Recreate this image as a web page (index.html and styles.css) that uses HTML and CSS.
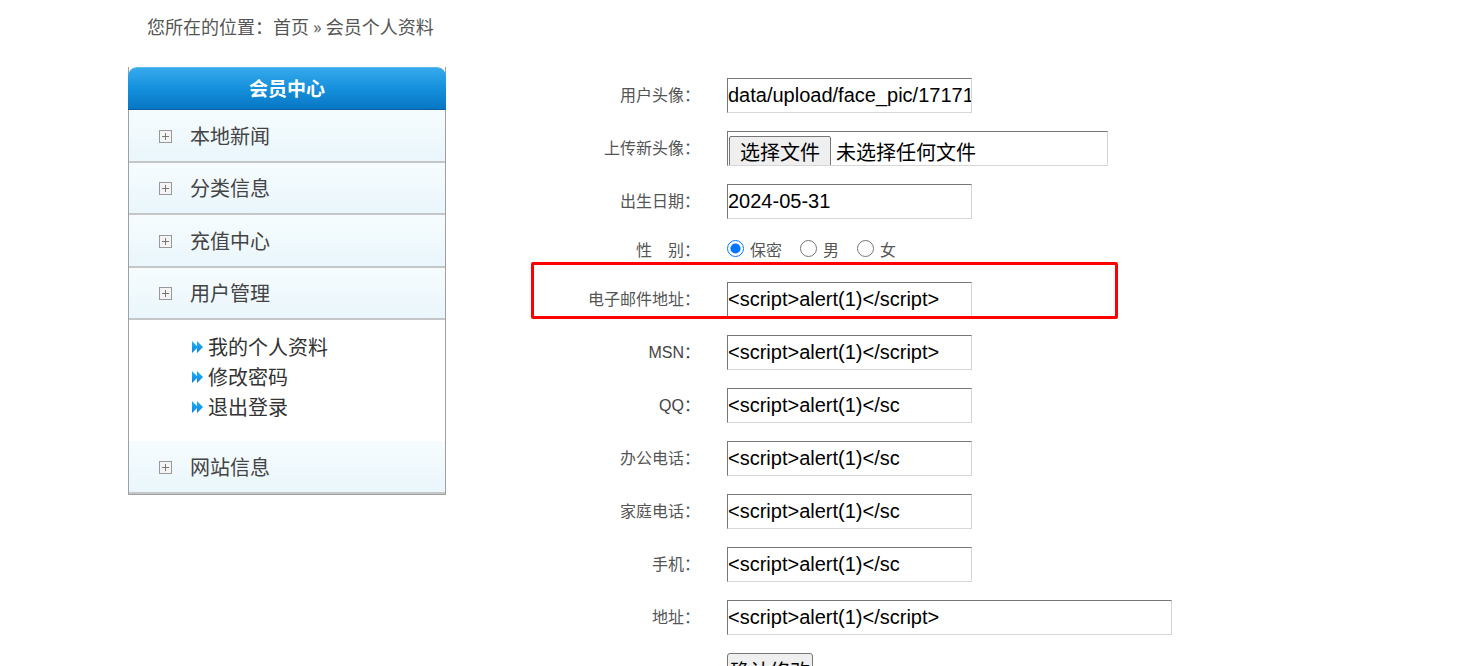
FILE: index.html
```html
<!DOCTYPE html>
<html lang="zh-CN">
<head>
<meta charset="utf-8">
<title>会员个人资料</title>
<link rel="stylesheet" href="styles.css">
</head>
<body>
<div class="page">
  <div class="crumb">您所在的位置：<a href="#">首页</a> » 会员个人资料</div>
  <div class="main">
    <aside class="side">
      <div class="side-head">会员中心</div>
      <div class="side-row"><span class="plus"></span>本地新闻</div>
      <div class="side-row"><span class="plus"></span>分类信息</div>
      <div class="side-row"><span class="plus"></span>充值中心</div>
      <div class="side-row"><span class="plus"></span>用户管理</div>
      <ul class="sub">
        <li><svg class="arr" viewBox="0 0 12 12" width="12" height="12"><defs><linearGradient id="g" x1="0" y1="0" x2="0" y2="1"><stop offset="0" stop-color="#22b8f5"/><stop offset="1" stop-color="#0a7fe0"/></linearGradient></defs><path d="M0 0 L6 6 L0 12 Z M5 0 L11 6 L5 12 Z" fill="url(#g)"/></svg>我的个人资料</li>
        <li><svg class="arr" viewBox="0 0 12 12" width="12" height="12"><path d="M0 0 L6 6 L0 12 Z M5 0 L11 6 L5 12 Z" fill="url(#g)"/></svg>修改密码</li>
        <li><svg class="arr" viewBox="0 0 12 12" width="12" height="12"><path d="M0 0 L6 6 L0 12 Z M5 0 L11 6 L5 12 Z" fill="url(#g)"/></svg>退出登录</li>
      </ul>
      <div class="side-row last"><span class="plus"></span>网站信息</div>
    </aside>
    <form class="form">
      <label class="lbl">用户头像：</label>
      <input class="txt" type="text" value="data/upload/face_pic/1717138720.jpg">
      <label class="lbl">上传新头像：</label>
      <div class="file"><button type="button" class="file-btn">选择文件</button><span class="file-name">未选择任何文件</span></div>
      <label class="lbl">出生日期：</label>
      <input class="txt" type="text" value="2024-05-31">
      <label class="lbl">性　别：</label>
      <div class="radios">
        <label class="opt"><input type="radio" name="sex" checked>保密</label>
        <label class="opt"><input type="radio" name="sex">男</label>
        <label class="opt"><input type="radio" name="sex">女</label>
      </div>
      <label class="lbl">电子邮件地址：</label>
      <input class="txt" type="text" value="<script>alert(1)</script>">
      <label class="lbl lat">MSN：</label>
      <input class="txt" type="text" value="<script>alert(1)</script>">
      <label class="lbl lat">QQ：</label>
      <input class="txt" type="text" value="<script>alert(1)</sc">
      <label class="lbl">办公电话：</label>
      <input class="txt" type="text" value="<script>alert(1)</sc">
      <label class="lbl">家庭电话：</label>
      <input class="txt" type="text" value="<script>alert(1)</sc">
      <label class="lbl">手机：</label>
      <input class="txt" type="text" value="<script>alert(1)</sc">
      <label class="lbl">地址：</label>
      <input class="txt wide" type="text" value="<script>alert(1)</script>">
      <span></span>
      <div><button type="button" class="submit">确认修改</button></div>
    </form>
  </div>
  <div class="mark"></div>
</div>
</body>
</html>
```
FILE: styles.css
```css
html, body {
  margin: 0;
  padding: 0;
  background: #fff;
}
.page {
  position: relative;
  padding-left: 128px;
  font-family: "Noto Sans CJK SC", "Liberation Sans", sans-serif;
  color: #555;
  height: 666px;
  overflow: hidden;
}
.crumb {
  padding: 13px 0 0 19px;
  height: 27px;
  line-height: 26px;
  font-size: 18px;
  color: #555;
}
.crumb a {
  color: #555;
  text-decoration: none;
}
.main {
  display: flex;
  align-items: flex-start;
  margin-top: 27px;
}
.side {
  width: 318px;
  box-sizing: border-box;
  border-left: 1px solid #a0a0a0;
  border-right: 1px solid #a0a0a0;
  border-bottom: 1px solid #a0a0a0;
  flex: none;
}
.side-head {
  height: 43px;
  margin: 0 -1px;
  border-radius: 9px 9px 0 0;
  background: linear-gradient(#36a9ec, #1590dc 50%, #0877c4);
  border-top: 1px solid #5bb8ee;
  border-bottom: 1px solid #0a5e9e;
  box-sizing: border-box;
  color: #fff;
  font-weight: bold;
  font-size: 19px;
  text-align: center;
  line-height: 39px;
}
.side-row {
  height: 52.5px;
  box-sizing: border-box;
  background: linear-gradient(#f6fcfe, #f0f9fd 50%, #e9f6fb);
  border-bottom: 2px solid #c4c6c8;
  display: flex;
  align-items: center;
  padding-left: 30px;
  font-size: 20px;
  color: #444;
}
.plus {
  width: 13px;
  height: 13px;
  box-sizing: border-box;
  border: 1px solid #999;
  position: relative;
  margin-right: 18px;
  margin-top: 2px;
  background: #f4f4f4;
}
.plus::before, .plus::after {
  content: "";
  position: absolute;
  background: #777;
}
.plus::before {
  left: 2px; right: 2px; top: 5px; height: 1px;
}
.plus::after {
  top: 2px; bottom: 2px; left: 5px; width: 1px;
}
.sub {
  list-style: none;
  margin: 0;
  padding: 12px 0 19px 63px;
  background: #fff;
}
.sub li {
  height: 30px;
  line-height: 30px;
  font-size: 20px;
  color: #333;
  display: flex;
  align-items: center;
}
.arr {
  margin-right: 4px;
}
.form {
  margin-left: 114px;
  padding-top: 11px;
  display: grid;
  grid-template-columns: 140px auto;
  column-gap: 27px;
  row-gap: 18px;
  align-items: center;
  justify-items: start;
}
.lbl {
  justify-self: end;
  font-size: 16px;
  color: #555;
  white-space: nowrap;
  padding-bottom: 3px;
}
.lbl.lat {
  font-family: "Liberation Sans", "Noto Sans CJK SC", sans-serif;
  font-size: 16px;
  color: #444;
}
.txt {
  width: 245px;
  height: 35px;
  box-sizing: border-box;
  margin: 0;
  padding: 0;
  border: 1px solid;
  border-color: #767676 #d6d6d6 #d6d6d6 #767676;
  font-family: "Liberation Sans", sans-serif;
  font-size: 20px;
  color: #000;
  background: #fff;
  outline: none;
}
.txt.wide {
  width: 445px;
}
.file {
  width: 381px;
  height: 35px;
  box-sizing: border-box;
  border: 1px solid;
  border-color: #767676 #d6d6d6 #d6d6d6 #767676;
  display: flex;
  align-items: flex-start;
  overflow: hidden;
}
.file-btn {
  margin: 4px 5px 0 1px;
  height: 36px;
  padding: 0 10px;
  font-family: "Noto Sans CJK SC", sans-serif;
  font-size: 20px;
  line-height: 30px;
  color: #000;
  background: #efefef;
  border: 1px solid #767676;
  border-radius: 2px;
  display: flex;
  align-items: flex-start;
}
.file-name {
  margin-top: 5px;
  font-size: 20px;
  line-height: 30px;
  color: #000;
}
.radios {
  height: 27px;
  box-sizing: border-box;
  padding-bottom: 4px;
  display: flex;
  align-items: center;
  gap: 18px;
}
.opt {
  display: flex;
  align-items: center;
  font-size: 16px;
  color: #555;
}
.opt input {
  width: 17px;
  height: 17px;
  margin: 0 6px 0 0;
}
.submit {
  height: 35px;
  padding: 0 2px;
  font-family: "Noto Sans CJK SC", sans-serif;
  font-size: 20px;
  color: #000;
  background: #efefef;
  border: 1px solid #767676;
  border-radius: 3px;
}
.mark {
  position: absolute;
  left: 531px;
  top: 262px;
  width: 587px;
  height: 57px;
  box-sizing: border-box;
  border: 3px solid #ff0000;
  border-radius: 2px;
}
```
